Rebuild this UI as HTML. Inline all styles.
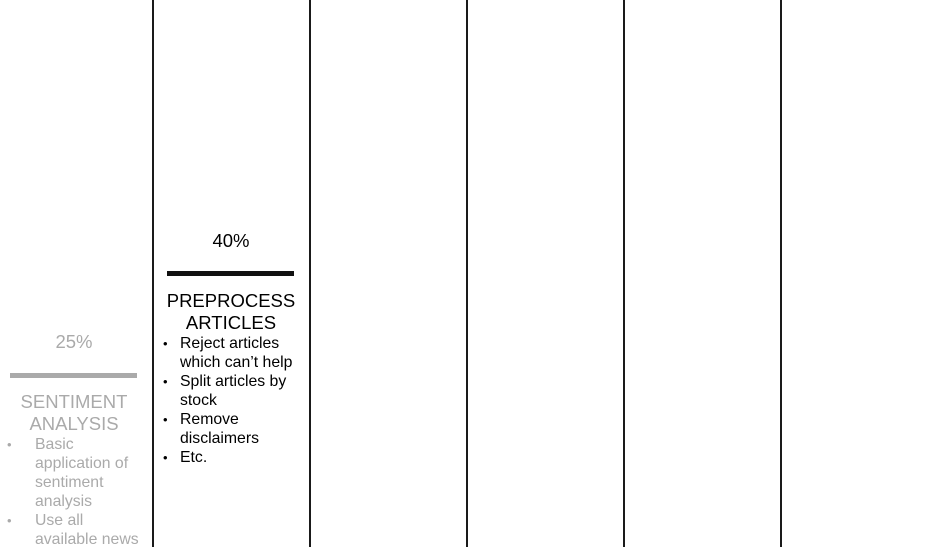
<!DOCTYPE html>
<html><head><style>
body{margin:0;width:939px;height:547px;background:#fff;position:relative;overflow:hidden;font-family:"Liberation Sans",sans-serif}
.v{position:absolute;top:0;height:547px;width:2px;background:#1a1a1a}
.t{position:absolute;text-align:center;font-size:18.5px;line-height:22px}
.b{position:absolute;font-size:15.8px;line-height:19px}
.b div{position:relative}
.bar{position:absolute;height:5px}
</style></head><body>
<div class="v" style="left:152px"></div>
<div class="v" style="left:309px"></div>
<div class="v" style="left:466px"></div>
<div class="v" style="left:623px"></div>
<div class="v" style="left:780px"></div>

<div class="t" style="left:155px;width:152px;top:230px;color:#000">40%</div>
<div class="bar" style="left:167px;width:127px;top:271px;background:#111"></div>
<div class="t" style="left:155px;width:152px;top:290px;color:#000">PREPROCESS<br>ARTICLES</div>
<div class="b" style="left:180px;top:334px;color:#000">
<div><span style="position:absolute;left:-17px;font-size:13px">•</span>Reject articles<br>which can’t help</div>
<div><span style="position:absolute;left:-17px;font-size:13px">•</span>Split articles by<br>stock</div>
<div><span style="position:absolute;left:-17px;font-size:13px">•</span>Remove<br>disclaimers</div>
<div><span style="position:absolute;left:-17px;font-size:13px">•</span>Etc.</div>
</div>

<div class="t" style="left:0;width:148px;top:331px;color:#aaa">25%</div>
<div class="bar" style="left:10px;width:127px;top:373px;background:#aaa"></div>
<div class="t" style="left:0;width:148px;top:391px;color:#aaa">SENTIMENT<br>ANALYSIS</div>
<div class="b" style="left:35px;top:435px;color:#aaa">
<div><span style="position:absolute;left:-28px;font-size:13px">•</span>Basic<br>application of<br>sentiment<br>analysis</div>
<div><span style="position:absolute;left:-28px;font-size:13px">•</span>Use all<br>available news</div>
</div>
</body></html>
